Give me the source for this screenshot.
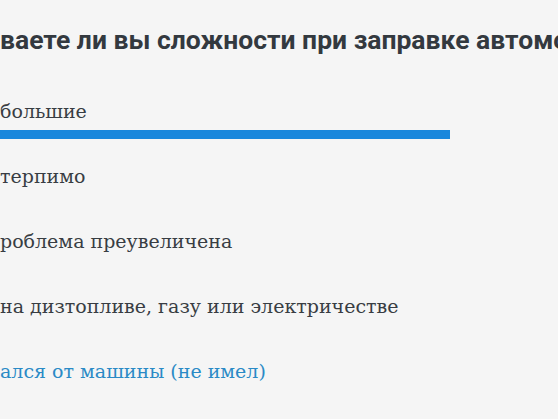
import React from "react";

type Option = {
  label: string;
  bar?: boolean;
  link?: boolean;
};

const options: Option[] = [
  { label: "большие", bar: true },
  { label: "терпимо" },
  { label: "роблема преувеличена" },
  { label: "на дизтопливе, газу или электричестве" },
  { label: "ался от машины (не имел)", link: true },
];

export default function App() {
  return (
    <div className="h-[419px] w-[558px] overflow-hidden bg-[#f5f5f5]">
      <div className="pt-[23px]">
        {/* Poll question */}
        <h2
          className="whitespace-nowrap text-[26.5px] font-bold leading-[34px] text-[#33393f]"
          style={{ fontFamily: "Roboto, 'Liberation Sans', sans-serif" }}
        >
          ваете ли вы сложности при заправке автомо
        </h2>

        {/* Answers */}
        <ul className="mt-[40px]" style={{ fontFamily: "'DejaVu Serif', 'Liberation Serif', serif" }}>
          {options.map((o, i) => (
            <li key={i} className="h-[65px]">
              <p
                className={`whitespace-nowrap text-[19px] leading-[28px] ${
                  o.link ? "text-[#2a8ac6]" : "text-[#383d43]"
                }`}
              >
                {o.label}
              </p>
              {o.bar && <div className="mt-[5px] h-[9px] w-[450px] bg-[#1a87dc]" />}
            </li>
          ))}
        </ul>
      </div>
    </div>
  );
}
